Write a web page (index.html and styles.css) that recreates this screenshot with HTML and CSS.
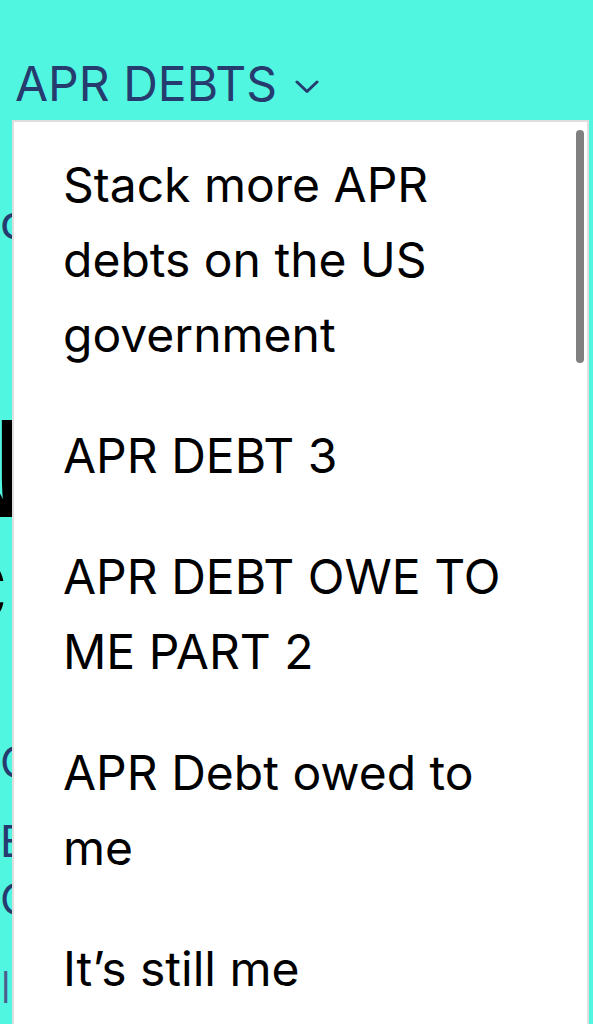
FILE: index.html
```html
<!DOCTYPE html>
<html lang="en">
<head>
    <meta charset="UTF-8">
    <meta name="viewport" content="width=device-width, initial-scale=1.0">
    <title>APR Debts</title>
    <link rel="stylesheet" href="styles.css">
</head>
<body>
    <div class="page">
        <div class="nav-title">
            <span>APR DEBTS</span>
            <svg class="chevron" width="24" height="14" viewBox="0 0 24 14">
                <polyline points="2,2 12,11.5 22,2" fill="none" stroke="#263b6e" stroke-width="3" stroke-linecap="round" stroke-linejoin="round"/>
            </svg>
        </div>

        <!-- contenido de la pagina, tapado por el menu -->
        <div class="behind">
            <div class="line small-one">one more debt</div>
            <div class="line big-n">N</div>
            <div class="line mid-c">C</div>
            <div class="line blue c1">Current debts</div>
            <div class="line blue c2">Entries</div>
            <div class="line blue c3">Questions</div>
            <div class="line blue light c4">Info</div>
        </div>
    </div>

    <div class="menu">
        <ul class="menu-list">
            <li>Stack more APR debts on the US government</li>
            <li>APR DEBT 3</li>
            <li>APR DEBT OWE TO ME PART 2</li>
            <li>APR Debt owed to me</li>
            <li>It’s still me</li>
        </ul>
        <div class="scroll-thumb"></div>
    </div>
</body>
</html>
```

FILE: styles.css
```css
body {
    margin: 0;
    background-color: #50f6e0;
    font-family: Inter, "Noto Sans", sans-serif;
    overflow: hidden;
    height: 1024px;
}
.page {
    padding-top: 60px;
}
.nav-title {
    display: flex;
    align-items: center;
    padding-left: 15px;
    font-size: 48px;
    line-height: 48px;
    color: #263b6e;
}
.chevron {
    margin-left: 18px;
    margin-top: 6px;
}
.behind {
    display: flex;
    flex-direction: column;
}
.line {
    white-space: nowrap;
}
.small-one {
    margin-top: 90px;
    font-size: 48px;
    line-height: 48px;
    color: #263b6e;
}
.big-n {
    margin-top: 156px;
    margin-left: -73px;
    font-size: 133px;
    line-height: 133px;
    font-weight: 500;
    color: #000;
}
.mid-c {
    margin-top: 14px;
    margin-left: -56px;
    font-size: 86px;
    line-height: 86px;
    font-weight: 600;
    color: #000;
}
.blue {
    font-size: 44px;
    line-height: 44px;
    color: #263b6e;
}
.light {
    font-weight: 300;
    color: #4a5d8e;
}
.c1 {
    margin-top: 105px;
}
.c2 {
    margin-top: 35px;
}
.c3 {
    margin-top: 14px;
}
.c4 {
    margin-top: 44px;
}
.menu {
    position: absolute;
    left: 12px;
    top: 120px;
    width: 573px;
    height: 920px;
    background: #ffffff;
    border: 2px solid #dedede;
}
.menu-list {
    list-style: none;
    margin: 0;
    padding: 2px 0 0;
}
.menu-list li {
    padding: 23px 64px 23px 49px;
    font-size: 48px;
    line-height: 75px;
    color: #000;
}
.scroll-thumb {
    position: absolute;
    top: 8px;
    right: 3px;
    width: 8px;
    height: 233px;
    border-radius: 4px;
    background: #808080;
}
```
